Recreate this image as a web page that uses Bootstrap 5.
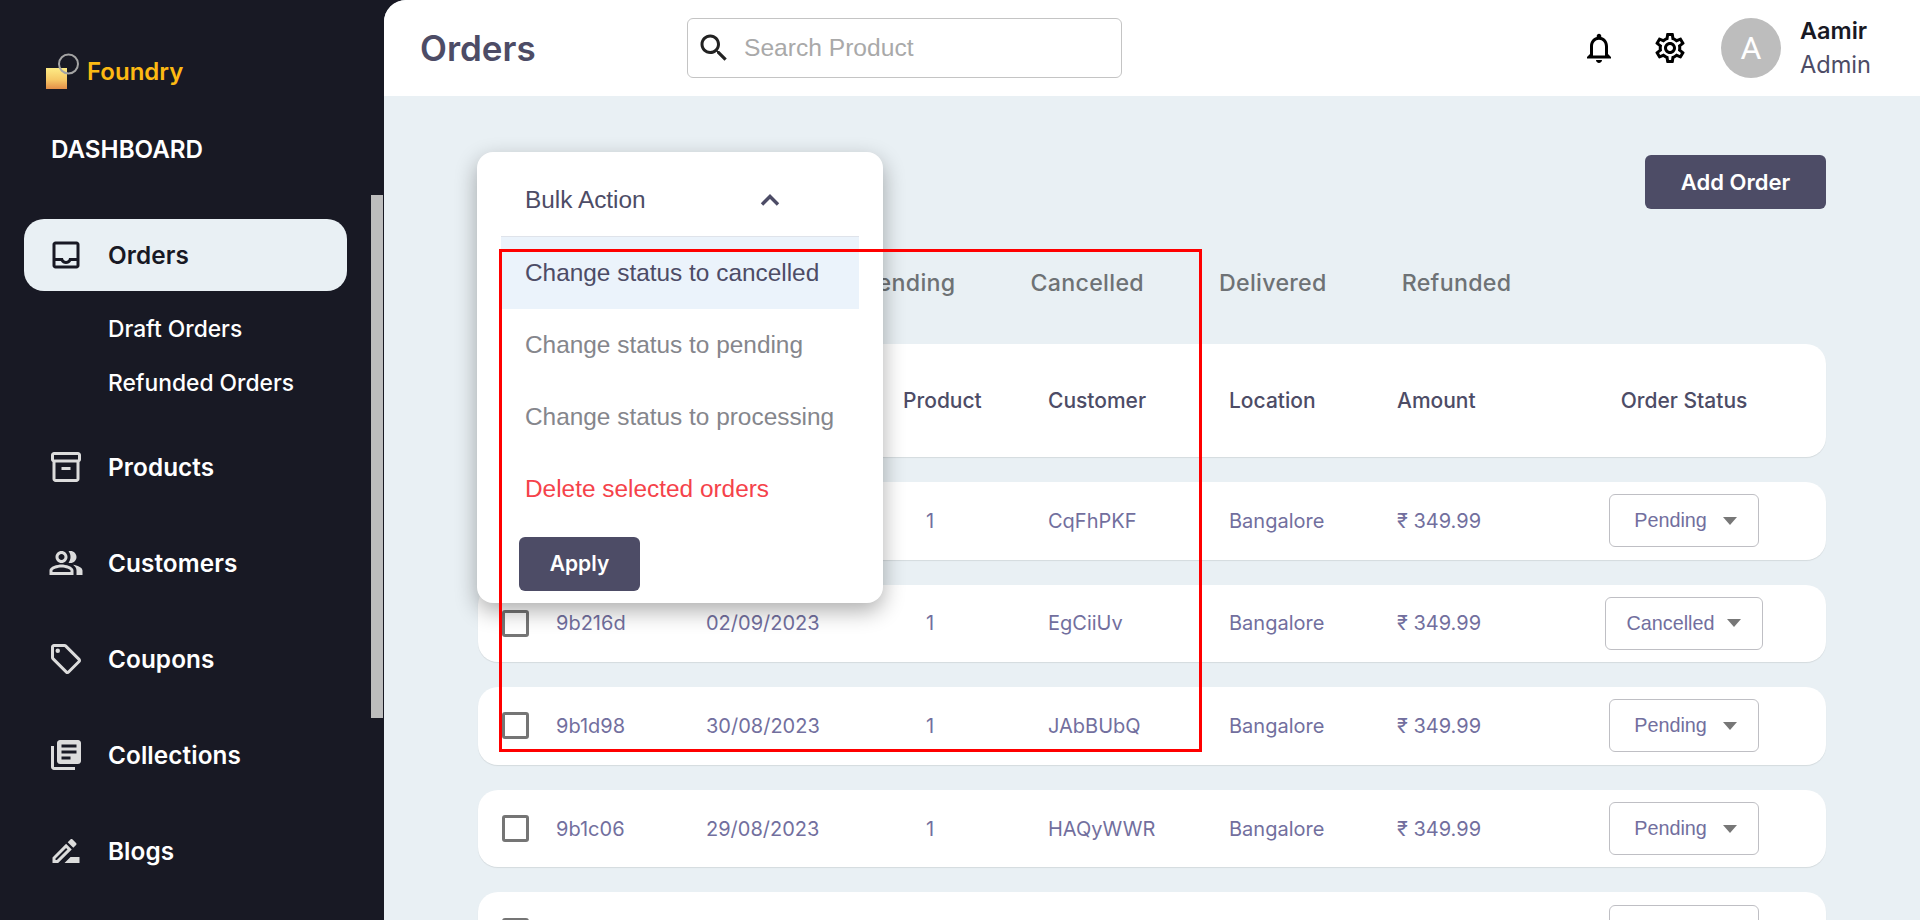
<!DOCTYPE html>
<html lang="en">
<head>
<meta charset="utf-8">
<title>Orders</title>
<link href="https://cdn.jsdelivr.net/npm/bootstrap@5.3.0/dist/css/bootstrap.min.css" rel="stylesheet">
<style>
html,body{height:100%;overflow:hidden;}
body{font-family:Inter,"Liberation Sans",sans-serif;background:#181924;}
.app-shell{height:920px;width:1920px;position:relative;overflow:hidden;}
.side{width:384px;flex:0 0 384px;background:#181924;position:relative;padding:55px 37px 0 24px;color:#fff;overflow:hidden;}
.side-thumb{position:absolute;left:371px;top:195px;width:12px;height:523px;background:#bdbdbd;}
.brand{height:34px;padding-left:22px;}
.brand-name{font-size:24px;font-weight:600;color:#fdb913;line-height:34px;margin-left:1px;}
.dash-title{font-size:24.2px;font-weight:600;line-height:30px;margin:46px 0 54px 27px;}
.side-item{height:72px;padding-left:24px;gap:24px;color:#fff;font-size:24.3px;letter-spacing:.1px;font-weight:600;text-decoration:none;border-radius:20px;margin-bottom:24px;}
.side-item svg{width:36px;height:36px;fill:#dcdcdc;flex:none;}
.side-item.is-on{background:#e9f0f4;color:#181924;margin-bottom:11px;}
.side-item.is-on svg{fill:#181924;}
.side-sub{height:54px;padding-left:84px;font-size:22.8px;font-weight:500;color:#fff;text-decoration:none;}
.side-subs{margin-bottom:21px;}
.main-area{flex:1 1 auto;min-width:0;background:#e9f0f4;border-top-left-radius:22px;overflow:hidden;}
.topbar{height:96px;background:#fff;padding:0 0 0 36px;}
.page-title{font-size:35px;font-weight:600;color:#4d4c66;margin:0;width:267px;line-height:1;}
.search-box{width:435px;height:60px;border:1px solid #c4c4c4;border-radius:6px;padding-left:8px;gap:10px;}
.search-box svg{width:36px;height:36px;fill:#222;flex:none;}
.search-input{border:0;outline:0;flex:1;min-width:0;font-family:"Liberation Sans",sans-serif;font-size:24.6px;background:transparent;color:#333;}
.search-input::placeholder{color:#a9a9a9;opacity:1;}
.top-right{margin-left:auto;padding-right:49px;}
.top-ico{width:36px;height:36px;fill:#000;flex:none;}
.bell-ico{margin-right:35px;}
.ava{width:60px;height:60px;border-radius:50%;background:#bdbdbd;color:#fff;font-size:32px;margin-left:33px;margin-right:19px;font-family:Roboto,sans-serif;}
.who{line-height:1;}
.who-name{font-size:23.5px;font-weight:600;color:#181924;margin-bottom:11px;}
.who-role{font-size:23.6px;color:#4d4c66;}
.content-pad{padding:59px 94px 0;position:relative;}
.act-btn{background:#4d4c66;color:#fff;border:0;border-radius:6px;height:54px;font-weight:600;font-size:21px;padding:0;}
.act-btn:hover{background:#4d4c66;color:#fff;}
.add-btn{width:181px;font-size:22px;}
.tabs-row{gap:75px;margin:59px 0 46px;height:30px;font-size:23.2px;letter-spacing:.3px;font-weight:500;color:#6e7275;line-height:30px;}
.tab-first{margin-right:-5px;}
.tbl-row{display:grid;grid-template-columns:54px 150px 197px 145px 181px 168px 168px 238px;align-items:center;padding-left:24px;background:#fff;border-radius:20px;height:77.6px;margin-bottom:25px;box-shadow:0 1px 1px rgba(0,0,0,.09);font-size:20px;color:#726f9e;}
.tbl-head{height:113px;font-size:21px;font-weight:500;color:#4d4c66;}
.qty-cell{padding-left:23px;}
.tick{width:27px;height:27px;border:3px solid #757575;border-radius:3px;margin:0;background:#fff;display:block;appearance:none;}
.stat-cell{text-align:center;}
.stat-box{height:53px;border:1px solid #bfbfc4;border-radius:6px;background:#fff;color:#726f9e;font-family:"Liberation Sans",sans-serif;font-size:19.8px;padding:0 21px 0 24px;gap:16px;vertical-align:middle;}
.stat-box.is-wide{padding:0 21px;gap:13px;}
.stat-caret{width:0;height:0;border-left:7px solid transparent;border-right:7px solid transparent;border-top:8px solid #777;}
.bulk-pop{position:absolute;left:477px;top:152px;width:406px;height:451px;background:#fff;border-radius:16px;padding:0 24px 12px;box-shadow:0 8px 22px rgba(0,0,0,.32);font-family:"Liberation Sans",sans-serif;font-size:24.4px;z-index:5;}
.bulk-head{height:85px;padding:12px 79px 0 24px;border-bottom:1px solid #dfe3ea;color:#4d4c66;}
.bulk-head svg{width:20px;height:12px;fill:none;stroke:#4d4c66;stroke-width:3.4;}
.bulk-opt{height:72px;padding-left:24px;color:#85868c;white-space:nowrap;}
.bulk-opt.is-hi{background:#ebf3fb;color:#4d4c66;}
.bulk-opt.is-del{color:#f5424a;}
.apply-btn{width:121px;margin:12px 0 0 18px;display:block;font-family:Inter,sans-serif;}
.red-frame{position:absolute;left:499px;top:249px;width:703px;height:503px;border:3px solid #f00;pointer-events:none;z-index:6;}
</style>
</head>
<body>
<div class="app-shell d-flex">
  <aside class="side">
    <div class="side-thumb"></div>
    <div class="brand d-flex align-items-center">
      <svg width="40" height="38" viewBox="0 0 40 38" aria-hidden="true">
        <defs><linearGradient id="gld" x1="0" y1="0" x2="0" y2="1"><stop offset="0" stop-color="#fdeb85"/><stop offset=".55" stop-color="#f6c967"/><stop offset="1" stop-color="#e38e48"/></linearGradient></defs>
        <rect x="0" y="15" width="21" height="21" fill="url(#gld)"/>
        <circle cx="22.5" cy="11" r="9.5" fill="none" stroke="#a4a4a4" stroke-width="2"/>
      </svg>
      <span class="brand-name">Foundry</span>
    </div>
    <div class="dash-title">DASHBOARD</div>
    <nav>
      <a class="side-item is-on d-flex align-items-center" href="#">
        <svg viewBox="0 0 24 24"><path d="M19 3H5c-1.1 0-2 .9-2 2v14c0 1.1.9 2 2 2h14c1.1 0 2-.9 2-2V5c0-1.1-.9-2-2-2zm0 16H5v-3h3.56c.69 1.19 1.97 2 3.44 2s2.75-.81 3.44-2H19v3zm0-5h-4.99c0 1.1-.9 2-2 2s-2-.9-2-2H5V5h14v9z"/></svg>
        <span>Orders</span>
      </a>
      <div class="side-subs">
        <a class="side-sub d-flex align-items-center" href="#">Draft Orders</a>
        <a class="side-sub d-flex align-items-center" href="#">Refunded Orders</a>
      </div>
      <a class="side-item d-flex align-items-center" href="#">
        <svg viewBox="0 0 24 24"><path d="M20 2H4c-1 0-2 .9-2 2v3.01c0 .72.43 1.34 1 1.69V20c0 1.1 1.1 2 2 2h14c.9 0 2-.9 2-2V8.7c.57-.35 1-.97 1-1.69V4c0-1.1-1-2-2-2zm-1 18H5V9h14v11zm1-13H4V4h16v3z"/><path d="M9 12h6v2H9z"/></svg>
        <span>Products</span>
      </a>
      <a class="side-item d-flex align-items-center" href="#">
        <svg viewBox="0 0 24 24"><path d="M16.67 13.13C18.04 14.06 19 15.32 19 17v3h4v-3c0-2.18-3.57-3.47-6.33-3.87z"/><path d="M15 12c2.21 0 4-1.79 4-4s-1.79-4-4-4c-.47 0-.91.1-1.33.24C14.5 5.27 15 6.58 15 8s-.5 2.73-1.33 3.76c.42.14.86.24 1.33.24z"/><path d="M9 12c2.21 0 4-1.79 4-4s-1.79-4-4-4-4 1.79-4 4 1.79 4 4 4zm0-6c1.1 0 2 .9 2 2s-.9 2-2 2-2-.9-2-2 .9-2 2-2z"/><path d="M9 13c-2.67 0-8 1.34-8 4v3h16v-3c0-2.66-5.33-4-8-4zm6 5H3v-.99C3.2 16.29 6.3 15 9 15s5.8 1.29 6 2v1z"/></svg>
        <span>Customers</span>
      </a>
      <a class="side-item d-flex align-items-center" href="#">
        <svg viewBox="0 0 24 24"><path d="M21.41 11.58l-9-9C12.05 2.22 11.55 2 11 2H4c-1.1 0-2 .9-2 2v7c0 .55.22 1.05.59 1.42l9 9c.36.36.86.58 1.41.58s1.05-.22 1.41-.59l7-7c.37-.36.59-.86.59-1.41s-.23-1.06-.59-1.42zM13 20.01L4 11V4h7v-.01l9 9-7 7.02z"/><circle cx="6.5" cy="6.5" r="1.5"/></svg>
        <span>Coupons</span>
      </a>
      <a class="side-item d-flex align-items-center" href="#">
        <svg viewBox="0 0 24 24"><path d="M4 6H2v14c0 1.1.9 2 2 2h14v-2H4V6zm16-4H8c-1.1 0-2 .9-2 2v12c0 1.1.9 2 2 2h12c1.1 0 2-.9 2-2V4c0-1.1-.9-2-2-2zm-1 9H9V9h10v2zm-4 4H9v-2h6v2zm4-8H9V5h10v2z"/></svg>
        <span>Collections</span>
      </a>
      <a class="side-item d-flex align-items-center" href="#">
        <svg viewBox="0 0 24 24"><path d="M15 16l-4 4h10v-4zM12.06 7.19L3 16.25V20h3.75l9.06-9.06-3.75-3.75zM5.92 18H5v-.92l7.06-7.06.92.92L5.92 18zM18.71 8.04c.39-.39.39-1.02 0-1.41l-2.34-2.34c-.39-.39-1.02-.39-1.41 0l-1.83 1.83 3.75 3.75 1.83-1.83z"/></svg>
        <span>Blogs</span>
      </a>
    </nav>
  </aside>
  <main class="main-area">
    <header class="topbar d-flex align-items-center">
      <h1 class="page-title">Orders</h1>
      <div class="search-box d-flex align-items-center">
        <svg viewBox="0 0 24 24"><path d="M15.5 14h-.79l-.28-.27C15.41 12.59 16 11.11 16 9.5 16 5.91 13.09 3 9.5 3S3 5.91 3 9.5 5.91 16 9.5 16c1.61 0 3.09-.59 4.23-1.57l.27.28v.79l5 4.99L20.49 19l-4.99-5zm-6 0C7.01 14 5 11.99 5 9.5S7.01 5 9.5 5 14 7.01 14 9.5 11.99 14 9.5 14z"/></svg>
        <input class="search-input" type="text" placeholder="Search Product">
      </div>
      <div class="top-right d-flex align-items-center">
        <svg class="top-ico bell-ico" viewBox="0 0 24 24"><path d="M12 22c1.1 0 2-.9 2-2h-4c0 1.1.9 2 2 2zm6-6v-5c0-3.07-1.64-5.64-4.5-6.32V4c0-.83-.67-1.5-1.5-1.5s-1.5.67-1.5 1.5v.68C7.63 5.36 6 7.92 6 11v5l-2 2v1h16v-1l-2-2zm-2 1H8v-6c0-2.48 1.51-4.5 4-4.5s4 2.02 4 4.5v6z"/></svg>
        <svg class="top-ico" viewBox="0 0 24 24"><path d="M19.43 12.98c.04-.32.07-.64.07-.98 0-.34-.03-.66-.07-.98l2.11-1.65c.19-.15.24-.42.12-.64l-2-3.46c-.09-.16-.26-.25-.44-.25-.06 0-.12.01-.17.03l-2.49 1c-.52-.4-1.08-.73-1.69-.98l-.38-2.65C14.46 2.18 14.25 2 14 2h-4c-.25 0-.46.18-.49.42l-.38 2.65c-.61.25-1.17.59-1.69.98l-2.49-1c-.06-.02-.12-.03-.18-.03-.17 0-.34.09-.43.25l-2 3.46c-.13.22-.07.49.12.64l2.11 1.65c-.04.32-.07.65-.07.98 0 .33.03.66.07.98l-2.11 1.65c-.19.15-.24.42-.12.64l2 3.46c.09.16.26.25.44.25.06 0 .12-.01.17-.03l2.49-1c.52.4 1.08.73 1.69.98l.38 2.65c.03.24.24.42.49.42h4c.25 0 .46-.18.49-.42l.38-2.65c.61-.25 1.17-.59 1.69-.98l2.49 1c.06.02.12.03.18.03.17 0 .34-.09.43-.25l2-3.46c.12-.22.07-.49-.12-.64l-2.11-1.65zm-1.98-1.71c.04.31.05.52.05.73 0 .21-.02.43-.05.73l-.14 1.13.89.7 1.08.84-.7 1.21-1.27-.51-1.04-.42-.9.68c-.43.32-.84.56-1.25.73l-1.06.43-.16 1.13-.2 1.35h-1.4l-.19-1.35-.16-1.13-1.06-.43c-.43-.18-.83-.41-1.23-.71l-.91-.7-1.06.43-1.27.51-.7-1.21 1.08-.84.89-.7-.14-1.13c-.03-.31-.05-.54-.05-.74s.02-.43.05-.73l.14-1.13-.89-.7-1.08-.84.7-1.21 1.27.51 1.04.42.9-.68c.43-.32.84-.56 1.25-.73l1.06-.43.16-1.13.2-1.35h1.39l.19 1.35.16 1.13 1.06.43c.43.18.83.41 1.23.71l.91.7 1.06-.43 1.27-.51.7 1.21-1.07.85-.89.7.14 1.13zM12 8c-2.21 0-4 1.79-4 4s1.79 4 4 4 4-1.79 4-4-1.79-4-4-4zm0 6c-1.1 0-2-.9-2-2s.9-2 2-2 2 .9 2 2-.9 2-2 2z"/></svg>
        <div class="ava d-flex align-items-center justify-content-center">A</div>
        <div class="who">
          <div class="who-name">Aamir</div>
          <div class="who-role">Admin</div>
        </div>
      </div>
    </header>
    <section class="content-pad">
      <div class="d-flex justify-content-end">
        <button class="btn act-btn add-btn" type="button">Add Order</button>
      </div>
      <div class="tabs-row d-flex">
        <span class="tab-first">All Orders</span><span>Processing</span><span>Pending</span><span>Cancelled</span><span>Delivered</span><span>Refunded</span>
      </div>
      <div class="tbl-row tbl-head">
        <div><input class="tick" type="checkbox"></div><div>Id</div><div>Date</div><div>Product</div><div>Customer</div><div>Location</div><div>Amount</div><div class="stat-cell">Order Status</div>
      </div>
      <div class="tbl-row">
        <div><input class="tick" type="checkbox"></div><div>9b2211</div><div>02/09/2023</div><div class="qty-cell">1</div><div>CqFhPKF</div><div>Bangalore</div><div>₹ 349.99</div>
        <div class="stat-cell"><span class="stat-box d-inline-flex align-items-center">Pending<i class="stat-caret"></i></span></div>
      </div>
      <div class="tbl-row">
        <div><input class="tick" type="checkbox"></div><div>9b216d</div><div>02/09/2023</div><div class="qty-cell">1</div><div>EgCiiUv</div><div>Bangalore</div><div>₹ 349.99</div>
        <div class="stat-cell"><span class="stat-box is-wide d-inline-flex align-items-center">Cancelled<i class="stat-caret"></i></span></div>
      </div>
      <div class="tbl-row">
        <div><input class="tick" type="checkbox"></div><div>9b1d98</div><div>30/08/2023</div><div class="qty-cell">1</div><div>JAbBUbQ</div><div>Bangalore</div><div>₹ 349.99</div>
        <div class="stat-cell"><span class="stat-box d-inline-flex align-items-center">Pending<i class="stat-caret"></i></span></div>
      </div>
      <div class="tbl-row">
        <div><input class="tick" type="checkbox"></div><div>9b1c06</div><div>29/08/2023</div><div class="qty-cell">1</div><div>HAQyWWR</div><div>Bangalore</div><div>₹ 349.99</div>
        <div class="stat-cell"><span class="stat-box d-inline-flex align-items-center">Pending<i class="stat-caret"></i></span></div>
      </div>
      <div class="tbl-row">
        <div><input class="tick" type="checkbox"></div><div>9b1b42</div><div>29/08/2023</div><div class="qty-cell">1</div><div>KLmPqRs</div><div>Bangalore</div><div>₹ 349.99</div>
        <div class="stat-cell"><span class="stat-box d-inline-flex align-items-center">Pending<i class="stat-caret"></i></span></div>
      </div>
    </section>
  </main>
  <div class="bulk-pop">
    <div class="bulk-head d-flex align-items-center justify-content-between">
      <span>Bulk Action</span>
      <svg viewBox="0 0 20 12"><path d="M2 10.5 10 2.5 18 10.5"/></svg>
    </div>
    <div class="bulk-opt is-hi d-flex align-items-center">Change status to cancelled</div>
    <div class="bulk-opt d-flex align-items-center">Change status to pending</div>
    <div class="bulk-opt d-flex align-items-center">Change status to processing</div>
    <div class="bulk-opt is-del d-flex align-items-center">Delete selected orders</div>
    <button class="btn act-btn apply-btn" type="button">Apply</button>
  </div>
  <div class="red-frame"></div>
</div>
<script src="https://cdn.jsdelivr.net/npm/bootstrap@5.3.0/dist/js/bootstrap.bundle.min.js"></script>
</body>
</html>
